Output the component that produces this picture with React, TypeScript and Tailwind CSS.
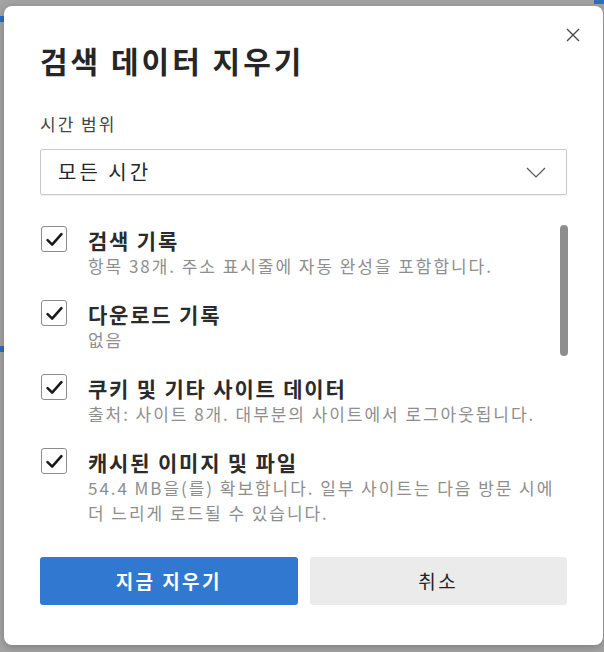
import React from 'react';

const items = [
    {title: '검색 기록', desc: ['항목 38개. 주소 표시줄에 자동 완성을 포함합니다.']},
    {title: '다운로드 기록', desc: ['없음']},
    {title: '쿠키 및 기타 사이트 데이터', desc: ['출처: 사이트 8개. 대부분의 사이트에서 로그아웃됩니다.']},
    {title: '캐시된 이미지 및 파일', desc: ['54.4 MB을(를) 확보합니다. 일부 사이트는 다음 방문 시에', '더 느리게 로드될 수 있습니다.']},
];

const font = {fontFamily: '"Noto Sans CJK KR", "Noto Sans", sans-serif'};

const CheckBox = () => (
    <div className="mt-[-1px] flex h-[26px] w-[26px] shrink-0 items-center justify-center rounded-[3px] border border-[#8c8c8c] bg-white">
        <svg width="17" height="15" viewBox="0 0 16 14" fill="none">
            <path d="M1.5 7.5 L5.8 11.8 L14.5 2" stroke="#1a1a1a" strokeWidth="2.4" strokeLinecap="round" strokeLinejoin="round"/>
        </svg>
    </div>
);

export default () => {
    return (
        <div className="relative h-[652px] w-[604px] overflow-hidden bg-[#a4a4a4] pl-[4px] pt-[6px]" style={font}>
            {/* bits of the page behind the dialog */}
            <div className="absolute left-0 top-[16px] h-[6px] w-[4px] bg-[#2d6fc4]"/>
            <div className="absolute left-0 top-[346px] h-[6px] w-[4px] bg-[#2d6fc4]"/>
            <div className="absolute right-0 top-0 h-[4px] w-[10px] bg-[#2d6fc4]"/>

            <div className="relative h-[639px] w-[599px] rounded-[8px] bg-white pl-[36px] pr-[36px] pt-[36px] shadow-[0_2px_8px_rgba(0,0,0,0.25)]">
                <button type="button" className="absolute right-[23px] top-[22px] flex h-[14px] w-[14px] items-center justify-center">
                    <svg width="14" height="14" viewBox="0 0 14 14" fill="none">
                        <path d="M1 1 L13 13 M13 1 L1 13" stroke="#4a4a4a" strokeWidth="1.4"/>
                    </svg>
                </button>

                <h1 className="text-[30px] font-semibold leading-[36px] tracking-[3px] text-[#262626]">검색 데이터 지우기</h1>

                <p className="mt-[35px] text-[17px] leading-[22px] tracking-[2px] text-[#444]">시간 범위</p>

                <div className="mt-[14px] flex h-[46px] items-center justify-between rounded-[2px] border border-[#c8c8c8] pl-[17px] pr-[20px] shadow-[0_1px_1px_rgba(0,0,0,0.06)]">
                    <span className="text-[20px] tracking-[3px] text-[#262626]">모든 시간</span>
                    <svg width="20" height="11" viewBox="0 0 20 11" fill="none">
                        <path d="M1 1 L10 10 L19 1" stroke="#555" strokeWidth="1.2"/>
                    </svg>
                </div>

                <div className="relative mt-[32px] flex flex-col gap-[23px]">
                    {items.map((item, index) => (
                        <div className="flex gap-[21px] pl-[1px]" key={index}>
                            <CheckBox/>
                            <div className="flex flex-col">
                                <span className="text-[21px] font-semibold leading-[26px] tracking-[1.8px] text-[#2b2b2b]">{item.title}</span>
                                {item.desc.map((line, i) => (
                                    <span className="whitespace-nowrap text-[17px] leading-[25px] tracking-[1.95px] text-[#8e8e8e]" key={i}>{line}</span>
                                ))}
                            </div>
                        </div>
                    ))}
                    <div className="absolute right-[-1px] top-[-2px] h-[131px] w-[8px] rounded-full bg-[#8e8e8e]"/>
                </div>

                <div className="mt-[32px] flex gap-[12px]">
                    <button type="button" className="h-[48px] flex-1 rounded-[3px] bg-[#3179d0] text-[19px] font-semibold tracking-[2.4px] text-white">지금 지우기</button>
                    <button type="button" className="h-[48px] flex-1 rounded-[3px] bg-[#ebebeb] text-[19px] tracking-[2.4px] text-[#222]">취소</button>
                </div>
            </div>
        </div>
    )
}
